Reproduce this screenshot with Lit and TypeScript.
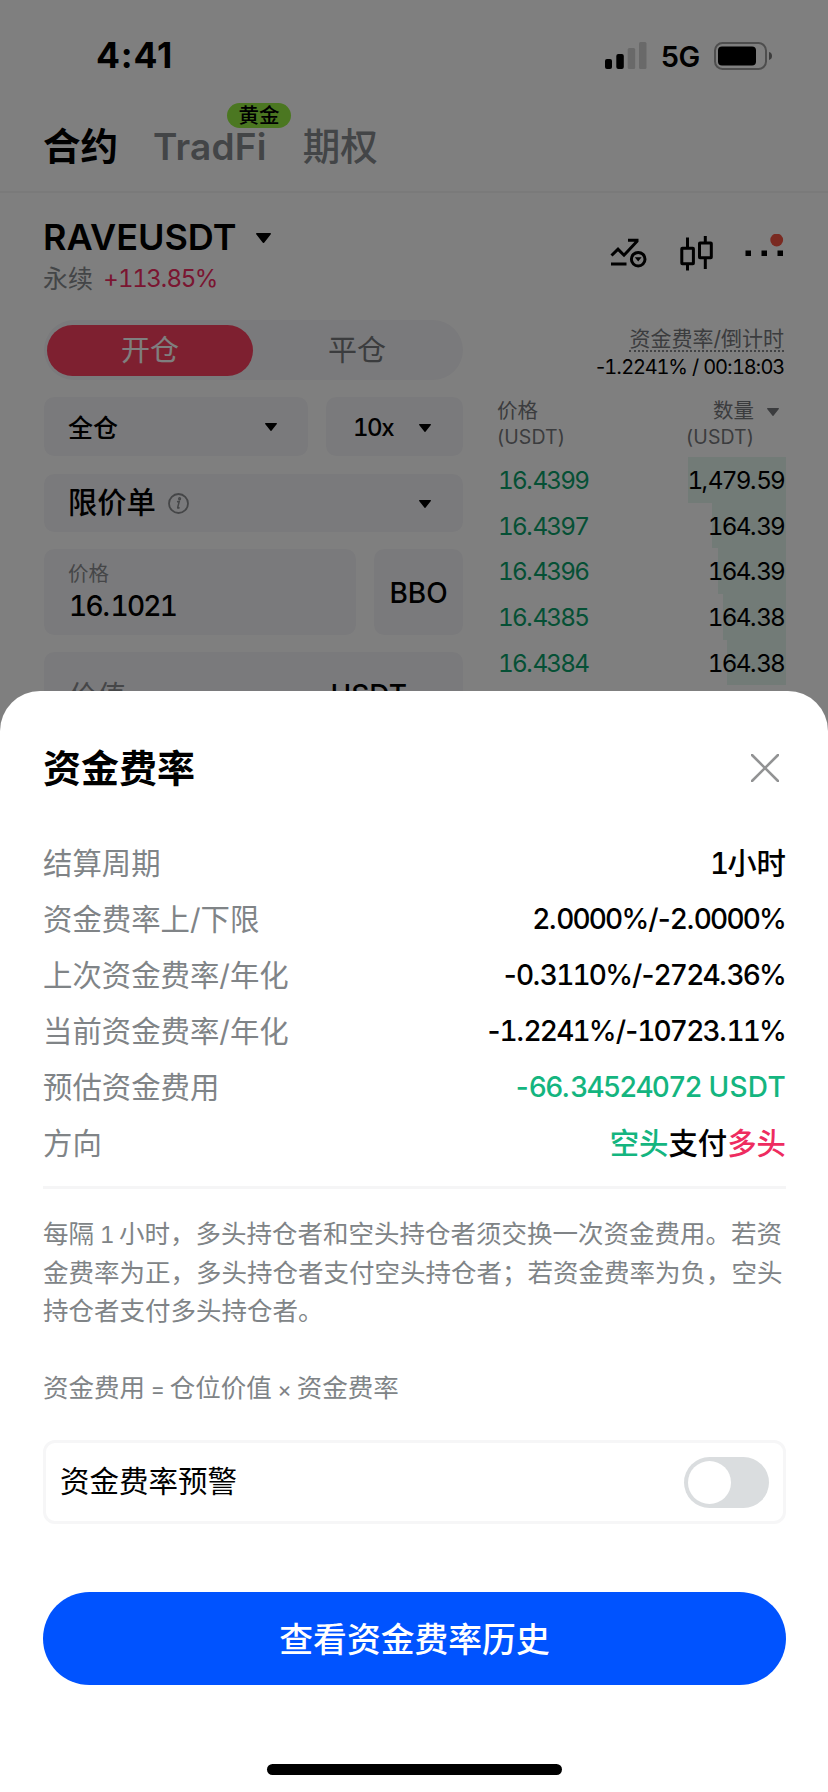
import { LitElement, html, css } from "lit";
import { customElement } from "lit/decorators.js";

/** Digits use tabular figures; letters and punctuation keep their natural width. */
const num = (text: string) =>
  text.split(/(\d+)/).filter((p) => p).map((p) => (/\d/.test(p) ? html`<span class="d">${p}</span>` : p));

const caret = (w: number, h: number, cls = "") => html`
  <svg class="caret ${cls}" width=${w} height=${h} viewBox="0 0 14 10" preserveAspectRatio="none">
    <path d="M.8 0h12.400c.7 0 1 .7.6 1.200L7.800 9.500a1 1 0 0 1-1.600 0L.2 1.200C-.2.7.1 0 .8 0Z" fill="currentColor" />
  </svg>`;

const BOOK: [string, string, number][] = [
  ["16.4399", "1,479.59", 98],
  ["16.4397", "164.39", 74],
  ["16.4396", "164.39", 68],
  ["16.4385", "164.38", 63],
  ["16.4384", "164.38", 59],
];

const RATES: [string, string][] = [
  ["资金费率上/下限", "2.0000%/-2.0000%"],
  ["上次资金费率/年化", "-0.3110%/-2724.36%"],
  ["当前资金费率/年化", "-1.2241%/-10723.11%"],
];

const shared = css`
  * { box-sizing: border-box; }
  :host { display: block; box-sizing: border-box; font-family: Inter, "Noto Sans CJK SC", sans-serif; white-space: nowrap; }
  .d { font-feature-settings: "tnum"; letter-spacing: -0.06em; }
  svg { display: block; flex: none; }
`;

@customElement("trade-page")
class TradePage extends LitElement {
  static styles = [shared, css`
    :host { background: #fff; color: #000; height: 1792px; overflow: hidden; }
    .status { height: 111px; padding: 0 55px 0 96px; display: flex; align-items: center; }
    .time { font: 700 35.500px Inter; letter-spacing: 0.8px; flex: 1; }
    .net { font: 600 29px Inter; margin: 0 14px 0 14px; letter-spacing: -0.3px; padding-top: 2px; }
    .tabs { height: 82px; padding-left: 43px; display: flex; align-items: flex-start; border-bottom: 2px solid #f4f4f5; font-size: 37.500px; line-height: 71px; font-weight: 500; }
    .tab { color: #868a8e; position: relative; }
    .tab.on { color: #000; font-weight: 600; }
    .tab.fi { margin: 0 36px 0 35px; font-weight: 600; font-size: 37px; letter-spacing: 0.2px; }
    .tag { position: absolute; left: 74px; top: -8px; width: 64px; height: 25px; border-radius: 12.5px; background: #97ef43; color: #000; font-size: 20.500px; line-height: 26px; text-align: center; font-weight: 500; letter-spacing: 0; }
    .head { display: flex; padding: 22px 44px 0 43px; height: 127px; }
    .pair { flex: 1; }
    .sym { display: flex; align-items: center; font-size: 36px; font-weight: 600; line-height: 44px; letter-spacing: 0; gap: 19px; }
    .sub { font-size: 25px; line-height: 40px; color: #868a8e; display: flex; }
    .sub .up { color: #f52c63; font-size: 24px; margin-left: 10px; letter-spacing: -0.8px; }
    .tools { display: flex; padding-top: 19px; }
    .main { display: grid; grid-template-columns: 419px 287px; gap: 34px; padding-left: 44px; }
    .form { display: grid; gap: 17px; align-content: start; }
    .seg { height: 60px; border-radius: 30px; background: #f5f5f8; padding: 5px 3px 4px; display: grid; grid-template-columns: 206px 1fr; font-size: 29px; text-align: center; line-height: 52px; color: #77797c; }
    .seg .on { background: #fc4160; border-radius: 26px; color: #fff; height: 51px; }
    .seg .off { padding-left: 1px; }
    .row { display: flex; gap: 18px; }
    .box { background: #f5f5f8; border-radius: 10px; display: flex; align-items: center; }
    .margin { width: 264px; height: 59px; padding: 0 31px 1px 24px; font-size: 25px; font-weight: 500; justify-content: space-between; }
    .caret { margin-top: 2px; }
    .lev { flex: 1; padding: 1px 32px 0 27px; font-size: 24px; font-weight: 500; justify-content: space-between; }
    .type { height: 58px; padding: 0 32px 1px 24px; font-size: 29.300px; font-weight: 500; margin-top: 1px; line-height: 30px; }
    .info { margin: 2px auto 0 12px; }
    .price { width: 312px; height: 86px; display: block; padding: 8px 24px; }
    .price .lab { font-size: 20.500px; line-height: 33px; color: #8b8d90; }
    .price .val { font-size: 28px; line-height: 33px; font-weight: 500; padding-left: 1px; }
    .bbo { flex: 1; justify-content: center; font-size: 28px; font-weight: 500; padding-top: 1px; }
    .value { height: 86px; padding: 0 56px 4px 25px; font-size: 28.500px; color: #8b8d90; justify-content: space-between; }
    .value b { font-size: 28px; color: #000; font-weight: 500; padding-top: 4px; }
    .book { text-align: right; }
    .fund { display: inline-block; margin-top: 7px; font-size: 21px; line-height: 23px; border-bottom: 2px dotted #85878a; color: #77797c; vertical-align: top; }
    .count { font-size: 20px; line-height: 26px; margin-top: 2px; letter-spacing: -0.75px; }
    .cols { display: flex; justify-content: space-between; margin-top: 17px; font-size: 20.500px; line-height: 27px; color: #77797c; text-align: left; }
    .cols .us { font-size: 19.500px; letter-spacing: 0.1px; }
    .qty { text-align: right; display: grid; grid-template-columns: auto auto; column-gap: 13px; align-items: center; padding-right: 5px; }
    .lines { margin-top: 6px; }
    .line { height: 45.700px; display: flex; justify-content: space-between; align-items: center; font-size: 24.300px; letter-spacing: -0.5px; position: relative; }
    .line .d { letter-spacing: -0.075em; }
    .line .p { color: #0ba16b; padding-left: 1px; }
    .line .q { position: relative; }
    .bar { position: absolute; top: 0; bottom: 0; right: -2px; background: #e4f6ef; }
  `];

  render() {
    return html`
      <div class="status">
        <span class="time">4:41</span>
        <svg width="42" height="27" viewBox="0 0 42 27">
          <rect x="0" y="17" width="7" height="10" rx="2" /><rect x="11.300" y="12" width="7.500" height="15" rx="2" />
          <rect x="22.700" y="6" width="7.500" height="21" rx="1.500" fill="#d2d2d2" /><rect x="34" y="0" width="7.500" height="27" rx="1.500" fill="#d2d2d2" />
        </svg>
        <span class="net">5G</span>
        <svg width="59" height="28" viewBox="0 0 59 28">
          <rect x="1" y="1" width="51" height="26" rx="7.500" fill="none" stroke="#9c9c9c" stroke-width="2" />
          <rect x="4" y="4.500" width="38" height="19" rx="4" /><path d="M55 10c2.300.6 3 2.200 3 4s-.7 3.400-3 4Z" fill="#7a7a7a" />
        </svg>
      </div>
      <div class="tabs">
        <span class="tab on">合约</span>
        <span class="tab fi">TradFi<span class="tag">黄金</span></span>
        <span class="tab">期权</span>
      </div>
      <div class="head">
        <div class="pair">
          <div class="sym">RAVEUSDT ${caret(15, 10)}</div>
          <div class="sub">永续<span class="up">${num("+113.85%")}</span></div>
        </div>
        <div class="tools">
          <svg width="174" height="40" viewBox="610 234 174 40" fill="none" stroke="#000" stroke-width="3">
            <path d="M611.500 255.500l6.500-6.300 6 6L637.500 240.800M628 240.200h10.500M611 264h15.500" />
            <circle cx="638.200" cy="259.200" r="6.800" /><path d="M634.800 257.300h6.800l-3.400 4.200z" fill="#000" stroke="none" />
            <rect x="681.800" y="248.300" width="11.600" height="15.500" rx=".5" /><path d="M687.500 237.500v10.500M687.500 264v6.500" />
            <rect x="699.500" y="243" width="11.800" height="14.700" rx=".5" /><path d="M705.300 236v7M705.300 258v11" />
            <path d="M745.500 250.500h5.500v5.500h-5.500zM761.500 250.500h5.500v5.500h-5.500zM777.500 250.500h5.500v5.500h-5.500z" fill="#000" stroke="none" />
            <circle cx="776.700" cy="240" r="6.400" fill="#f45443" stroke="none" />
          </svg>
        </div>
      </div>
      <div class="main">
        <div class="form">
          <div class="seg"><span class="on">开仓</span><span class="off">平仓</span></div>
          <div class="row">
            <div class="box margin">全仓 ${caret(12, 8)}</div>
            <div class="box lev"><span>${num("10x")}</span>${caret(12, 8)}</div>
          </div>
          <div class="box type">限价单
            <svg class="info" width="21" height="21" viewBox="0 0 21 21" fill="none" stroke="#8b8d90" stroke-width="1.800">
              <circle cx="10.500" cy="10.500" r="9.500" /><path d="M9 8.700l2.300-.4-1.600 6.200c-.2.9.8.8 1.800-.1" stroke-width="1.500" /><circle cx="11.600" cy="5.700" r=".7" />
            </svg>
            ${caret(12, 8)}
          </div>
          <div class="row">
            <div class="box price"><div class="lab">价格</div><div class="val">${num("16.1021")}</div></div>
            <div class="box bbo">BBO</div>
          </div>
          <div class="box value">价值<b>USDT</b></div>
        </div>
        <div class="book">
          <span class="fund">资金费率/倒计时</span>
          <div class="count">${num("-1.2241% / 00:18:03")}</div>
          <div class="cols">
            <div>价格<div class="us">(USDT)</div></div>
            <div class="qty"><span>数量</span>${caret(12, 8)}<span class="us">(USDT)</span></div>
          </div>
          <div class="lines">
            ${BOOK.map(([p, q, w]) => html`
              <div class="line">
                <span class="bar" style="width:${w}px"></span>
                <span class="p">${num(p)}</span><span class="q">${num(q)}</span>
              </div>`)}
          </div>
        </div>
      </div>`;
  }
}

@customElement("funding-sheet")
class FundingSheet extends LitElement {
  static styles = [shared, css`
    :host { background: #fff; border-radius: 40px 40px 0 0; padding: 47px 42px 0 43px; height: 1101px; color: #000; }
    .top { height: 60px; display: flex; justify-content: space-between; align-items: center; padding-right: 7px; font-size: 38px; font-weight: 700; }
    .top span { margin-top: -6px; }
    .list { margin-top: 36px; }
    .item { height: 56px; display: flex; justify-content: space-between; align-items: center; font-size: 29.400px; color: #808487; padding-bottom: 2px; }
    .v { font-size: 28px; font-weight: 500; color: #000; letter-spacing: -0.9px; padding-top: 3px; }
    .v .d { letter-spacing: -0.065em; }
    .amt { letter-spacing: 0.25px; }
    .zh { font-size: 29.400px; letter-spacing: 0; padding-top: 0; }
    .green { color: #14b57f; }
    .red { color: #ee2c60; }
    .rule { height: 3px; background: #f5f5f6; margin-top: 16px; }
    .note { margin-top: 26px; height: 225px; font-size: 25.500px; line-height: 38.200px; color: #808487; }
    .en { font-size: 23px; letter-spacing: -0.8px; }
    .eq { font-size: 22px; letter-spacing: -0.7px; }
    .gap { height: 38.200px; }
    .card { height: 84px; border: 3px solid #f6f6f7; border-radius: 12px; display: flex; align-items: center; justify-content: space-between; padding: 0 14px 0 14px; font-size: 29.500px; line-height: 40px; }
    .lbl { margin-top: -2px; }
    .switch { width: 85px; height: 51px; border-radius: 25.500px; background: #dadddf; padding: 4px; }
    .knob { width: 43px; height: 43px; border-radius: 50%; background: #fff; }
    .btn { margin-top: 68px; height: 93px; border-radius: 46.500px; background: #0053ff; color: #fff; display: flex; align-items: center; justify-content: center; font-size: 33.800px; font-weight: 500; padding-bottom: 2px; }
    .home { width: 295px; height: 11px; border-radius: 5.500px; background: #000; margin: 79px auto 0; }
  `];

  render() {
    return html`
      <div class="top"><span>资金费率</span>
        <svg width="28" height="28" viewBox="0 0 28 28"><path d="M1 1l26 26M27 1L1 27" stroke="#929394" stroke-width="2.600" stroke-linecap="round" /></svg>
      </div>
      <div class="list">
        <div class="item">结算周期<span class="v zh">${num("1")}小时</span></div>
        ${RATES.map(([l, v]) => html`<div class="item"><span>${l}</span><span class="v">${num(v)}</span></div>`)}
        <div class="item">预估资金费用<span class="v amt green">${num("-66.34524072 USDT")}</span></div>
        <div class="item">方向<span class="v zh"><span class="green">空头</span>支付<span class="red">多头</span></span></div>
      </div>
      <div class="rule"></div>
      <div class="note">
        <div>每隔<span class="en"> ${num("1")} </span>小时，多头持仓者和空头持仓者须交换一次资金费用。若资</div>
        <div>金费率为正，多头持仓者支付空头持仓者；若资金费率为负，空头</div>
        <div>持仓者支付多头持仓者。</div>
        <div class="gap"></div>
        <div>资金费用<span class="eq"> = </span>仓位价值<span class="eq"> × </span>资金费率</div>
      </div>
      <div class="card"><span class="lbl">资金费率预警</span><span class="switch"><div class="knob"></div></span></div>
      <div class="btn">查看资金费率历史</div>
      <div class="home"></div>`;
  }
}

@customElement("app-root")
class AppRoot extends LitElement {
  static styles = css`
    :host { display: block; position: relative; width: 828px; height: 1792px; overflow: hidden; }
    .mask { position: absolute; inset: 0; background: rgba(0, 0, 0, 0.5); }
    .sheet { position: absolute; left: 0; right: 0; bottom: 0; }
  `;
  render() {
    return html`<trade-page lang="zh-CN"></trade-page>
      <div class="mask"></div>
      <funding-sheet class="sheet" lang="zh-CN"></funding-sheet>`;
  }
}
